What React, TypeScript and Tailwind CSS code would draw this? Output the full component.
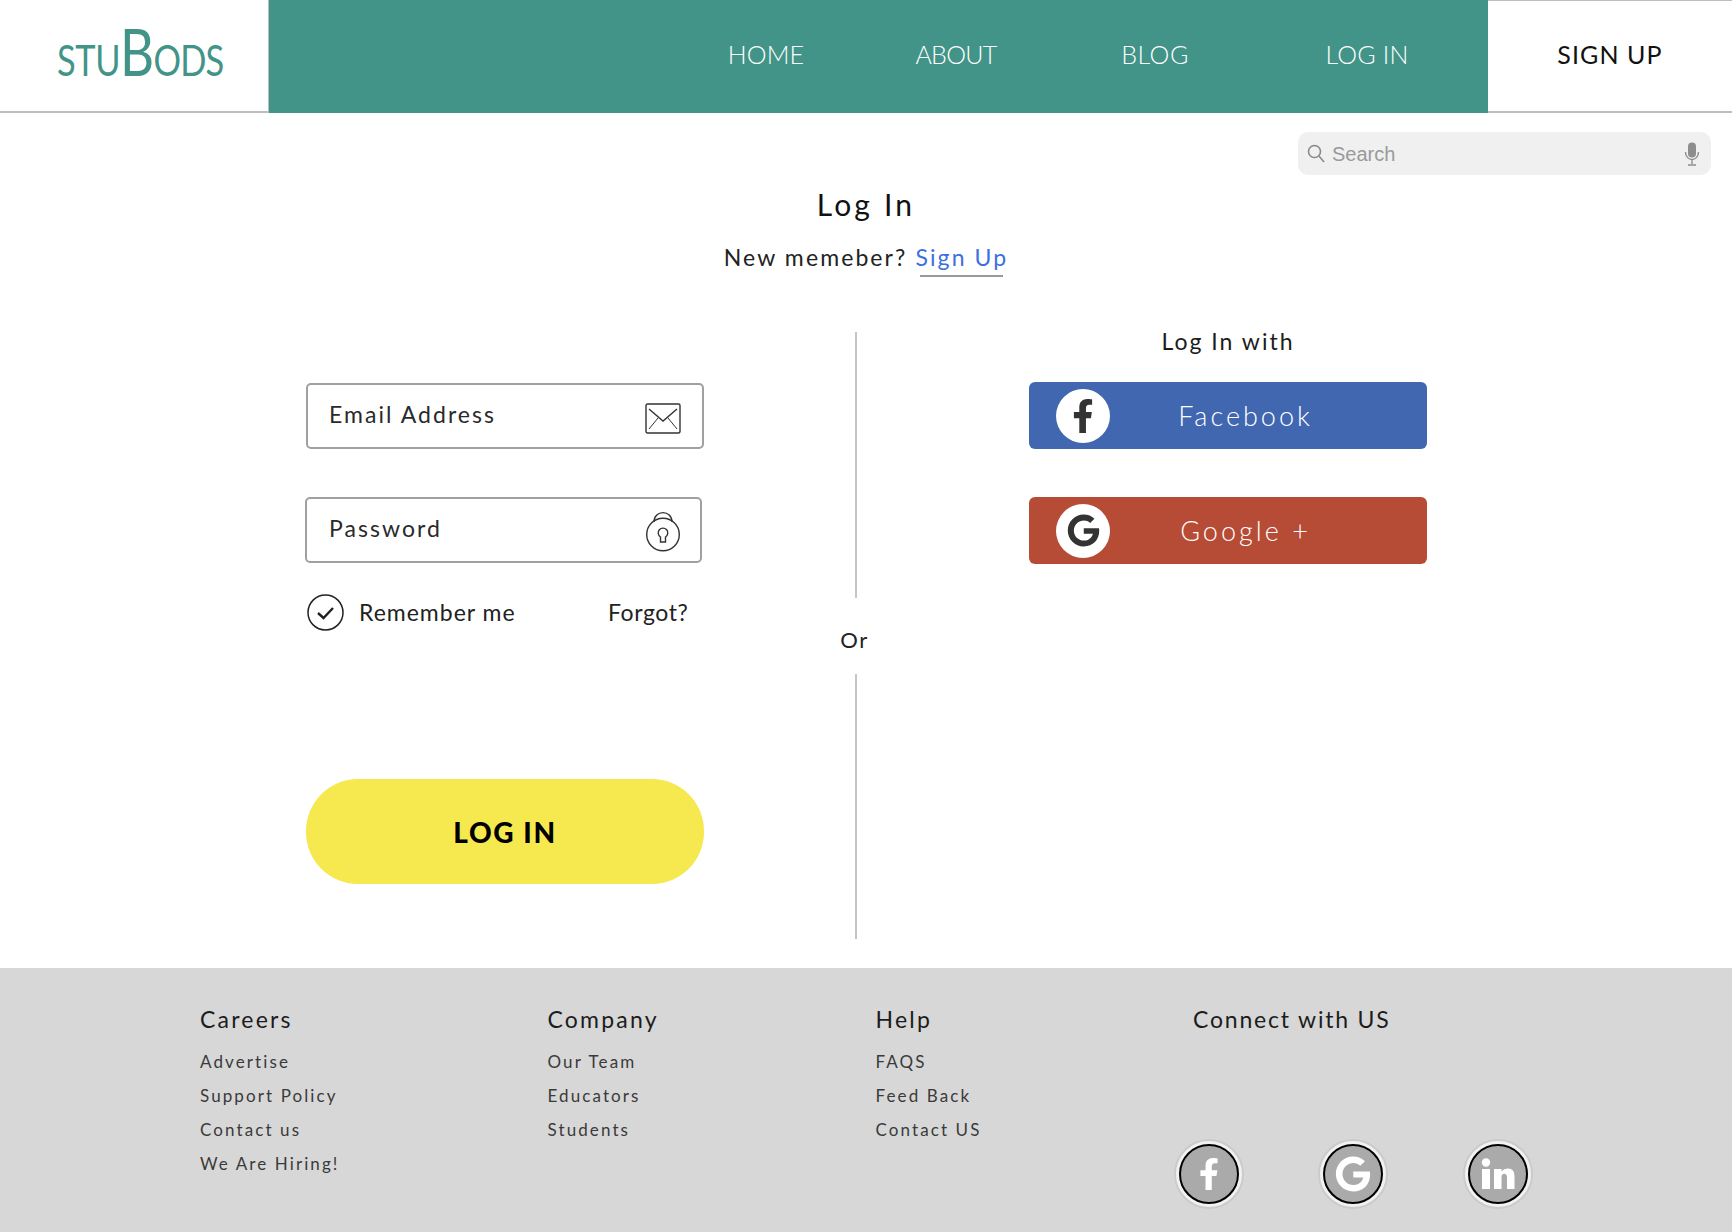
import React from "react";
import { FaFacebookF, FaGoogle } from "react-icons/fa";

const NavItem = ({ label, cls }: { label: string; cls: string }) => (
  <span className={`w-[120px] shrink-0 text-center text-[25px] leading-none ${cls}`}>{label}</span>
);

const Field = ({ label, icon, cls }: { label: string; icon: React.ReactNode; cls: string }) => (
  <div className={`flex h-[66px] w-[397px] items-center justify-between rounded-[5px] border-2 border-[#a0a0a0] pr-[21px] ${cls}`}>
    <span className="-mt-[3px] text-[23px] tracking-[2.05px] text-[#2a2a2a]">{label}</span>
    {icon}
  </div>
);

const Mail = () => (
  <svg width="36" height="32" viewBox="0 0 36 32" fill="none" stroke="#333" strokeWidth="1.4" className="mt-[5px]">
    <rect x="1" y="1" width="34" height="29" rx="1.5" />
    <path d="M4 6 L18 18 L32 6" />
    <path d="M4 26 L13 15 M32 26 L23 15" strokeWidth="1" />
  </svg>
);

const Lock = () => (
  <svg width="36" height="41" viewBox="0 0 36 41" fill="none" stroke="#333" strokeWidth="1.4" className="-mr-[2px] mt-[2px]">
    <circle cx="18" cy="23.5" r="16.3" />
    <path d="M9 11 C9 -1.5 27 -1.5 27 11" />
    <path d="M15.5 26 A4.8 4.8 0 1 1 20.5 26 L20.5 31 L15.5 31 Z" />
  </svg>
);

const Check = () => (
  <svg width="37" height="37" viewBox="0 0 37 37" fill="none" stroke="#222">
    <circle cx="18.5" cy="18.5" r="17.5" strokeWidth="1.5" />
    <path d="M11 19 L16.5 24 L26 14" strokeWidth="2.4" />
  </svg>
);

const SocialBtn = ({ bg, icon, label }: { bg: string; icon: React.ReactNode; label: string }) => (
  <div className={`flex h-[67px] items-center rounded-[6px] pl-[27px] ${bg}`}>
    <span className="flex h-[54px] w-[54px] shrink-0 items-center justify-center rounded-full bg-white text-[#333]">{icon}</span>
    <span className="flex-1 pr-[46px] text-center text-[27px] leading-none font-light tracking-[3px] text-white">{label}</span>
  </div>
);

const FooterCol = ({ title, items, cls }: { title: string; items: string[]; cls: string }) => (
  <div className={cls}>
    <div className="mb-[14px] h-[34px] text-[23px] leading-[34px] tracking-[2.2px] text-[#1c1c1c]">{title}</div>
    <div className="flex flex-col gap-[10px]">
      {items.map((t) => (
        <div key={t} className="h-[24px] text-[17px] leading-[24px] tracking-[2.1px] text-[#3a3a3a]">{t}</div>
      ))}
    </div>
  </div>
);

const Round = ({ children, cls }: { children: React.ReactNode; cls: string }) => (
  <div className={`flex h-[70px] w-[70px] items-center justify-center rounded-full border-2 border-[#cbcbcb] bg-[#f1f1f1] ${cls}`}>
    <div className="flex h-[60px] w-[60px] items-center justify-center rounded-full border-2 border-black bg-[#aaaaaa] text-white">{children}</div>
  </div>
);

const In = () => (
  <svg width="34" height="32" viewBox="0 0 34 32" fill="white">
    <circle cx="5" cy="4.5" r="4.2" />
    <rect x="1" y="11" width="8" height="20" />
    <path d="M13 11 H20.5 V13.5 C22 11.5 24.5 10.5 27 10.5 C31.5 10.5 33.5 13.5 33.5 18 V31 H26 V19.5 C26 17 25 15.8 23.2 15.8 C21.4 15.8 20.5 17 20.5 19.5 V31 H13 Z" />
  </svg>
);

export default function App() {
  return (
    <div className="flex min-h-[1232px] flex-col bg-white font-['Lato','Liberation_Sans',sans-serif]">
      <header className="flex h-[113px] shrink-0">
        <div className="flex w-[269px] items-center justify-start border-r border-b-2 border-[#bdbdbd] pb-[9px] pl-[57px] text-[#429488]">
          <span className="flex origin-left scale-x-[0.8] items-baseline leading-none font-normal">
            <span className="text-[43px] tracking-[-0.5px]">STU</span>
            <span className="text-[66px] tracking-[-1px]">B</span>
            <span className="text-[43px] tracking-[-1px]">ODS</span>
          </span>
        </div>
        <nav className="flex w-[1219px] items-center bg-[#429488] pb-[4px] pl-[437px] font-light text-white">
          <NavItem label="HOME" cls="tracking-[0.1px]" />
          <NavItem label="ABOUT" cls="ml-[70px] tracking-[-0.7px]" />
          <NavItem label="BLOG" cls="ml-[79px] tracking-[0.5px]" />
          <NavItem label="LOG IN" cls="ml-[92px] tracking-[0.2px]" />
        </nav>
        <div className="flex flex-1 items-center justify-center border-t border-b-2 border-[#bdbdbd] pb-[3px]">
          <NavItem label="SIGN UP" cls="tracking-[1.1px] text-[#111]" />
        </div>
      </header>

      <main className="flex flex-1 flex-col">
        <div className="flex justify-end pr-[21px] pt-[19px]">
          <div className="flex h-[43px] w-[413px] items-center justify-between rounded-[10px] bg-[#f0f0f0] pl-[9px] pr-[11px]">
            <div className="flex items-center gap-[7px]">
              <svg width="18" height="20" viewBox="0 0 18 20" fill="none" stroke="#8a8a8a" strokeWidth="1.6">
                <circle cx="7.5" cy="7.5" r="6" />
                <path d="M12 12 L17 18" />
              </svg>
              <span className="font-['Liberation_Sans',sans-serif] text-[20px] text-[#9a9a9a]">Search</span>
            </div>
            <svg width="16" height="24" viewBox="0 0 16 24" fill="none">
              <rect x="4" y="0.5" width="8" height="15" rx="4" fill="#8d8d8d" />
              <path d="M1.5 10 C1.5 20 14.5 20 14.5 10 M8 18 V22 M4 23 H12" stroke="#8d8d8d" strokeWidth="1.4" />
            </svg>
          </div>
        </div>

        <h1 className="mt-[11px] text-center text-[30px] leading-[36px] font-normal tracking-[3.2px] text-[#111]">Log In</h1>
        <p className="mt-[21px] text-center text-[23px] leading-[28px] tracking-[2.1px] text-[#222]">
          New memeber?{" "}
          <span className="relative text-[#3d6fe0]">
            Sign Up
            <span className="absolute right-[5px] -bottom-[6px] left-[5px] h-[2px] bg-[#9a9a9a]" />
          </span>
        </p>

        <div className="mt-[61px] flex pl-[305px]">
          <div className="flex w-[399px] flex-col pt-[51px]">
            <Field label="Email Address" cls="ml-[1px] w-[398px] pl-[21px]" icon={<Mail />} />
            <Field label="Password" cls="mt-[48px] pl-[22px]" icon={<Lock />} />
            <div className="mt-[31px] flex items-center pl-[2px]">
              <Check />
              <span className="ml-[15px] w-[249px] text-[23px] leading-none tracking-[1px] text-[#222]">Remember me</span>
              <span className="text-[23px] leading-none tracking-[0.6px] text-[#222]">Forgot?</span>
            </div>
            <button className="mt-[148px] ml-[1px] flex h-[105px] w-[398px] items-center justify-center rounded-[52px] bg-[#f6e84f] text-[28px] font-black tracking-[1.6px] text-black">
              LOG IN
            </button>
          </div>

          <div className="ml-[122px] flex h-[607px] w-[60px] flex-col items-center">
            <div className="h-[266px] w-[2px] bg-[#c6c6c6]" />
            <div className="flex h-[76px] items-center pt-[6px] pr-[3px] text-[22px] tracking-[1.5px] text-[#222]">Or</div>
            <div className="h-[265px] w-[2px] bg-[#c6c6c6]" />
          </div>

          <div className="ml-[143px] flex w-[398px] flex-col">
            <div className="-mt-[3px] mb-[29px] h-[24px] text-center text-[23px] leading-[24px] tracking-[2px] text-[#1c1c1c]">Log In with</div>
            <SocialBtn bg="bg-[#4167b1]" label="Facebook" icon={<FaFacebookF className="h-[34px] w-[34px]" />} />
            <div className="h-[48px]" />
            <SocialBtn bg="bg-[#b64b36]" label="Google +" icon={<FaGoogle className="h-[33px] w-[33px]" />} />
          </div>
        </div>
      </main>

      <footer className="flex h-[264px] shrink-0 bg-[#d7d7d7] pl-[200px] pt-[34px]">
        <FooterCol cls="w-[347.5px]" title="Careers" items={["Advertise", "Support Policy", "Contact us", "We Are Hiring!"]} />
        <FooterCol cls="w-[328px]" title="Company" items={["Our Team", "Educators", "Students"]} />
        <FooterCol cls="w-[317.5px]" title="Help" items={["FAQS", "Feed Back", "Contact US"]} />
        <div className="flex flex-col">
          <div className="h-[34px] text-[23px] leading-[34px] tracking-[1.8px] text-[#1c1c1c]">Connect with US</div>
          <div className="mt-[103px] -ml-[19px] flex">
            <Round cls=""><FaFacebookF className="h-[32px] w-[32px]" /></Round>
            <Round cls="ml-[74px]"><FaGoogle className="h-[36px] w-[36px]" /></Round>
            <Round cls="ml-[75px]"><In /></Round>
          </div>
        </div>
      </footer>
    </div>
  );
}
